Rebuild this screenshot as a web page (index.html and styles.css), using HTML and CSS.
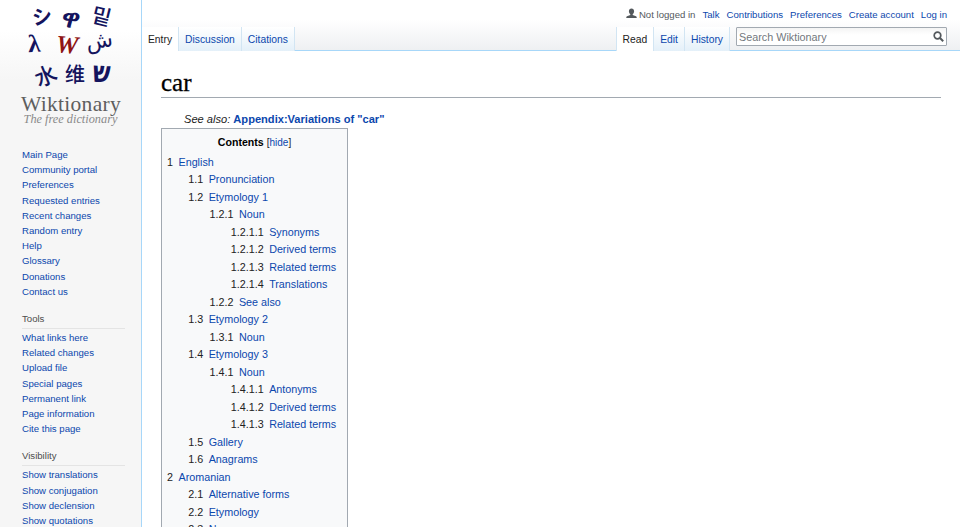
FILE: index.html
```html
<!DOCTYPE html>
<html lang="en">
<head>
<meta charset="utf-8">
<title>car - Wiktionary</title>
<link rel="stylesheet" href="styles.css">
</head>
<body>
<div class="page">
  <aside class="sidebar">
    <div class="logo">
      <div class="glyphs">
        <span class="g g1">シ</span><span class="g g2">ዋ</span><span class="g g3">밑</span>
        <span class="g g4">λ</span><span class="g g5">W</span><span class="g g6">ش</span>
        <span class="g g7">水</span><span class="g g8">维</span><span class="g g9">ש</span>
      </div>
      <div class="wordmark">Wiktionary</div>
      <div class="tagline">The free dictionary</div>
    </div>
    <nav class="portal first">
      <ul>
        <li><a href="#">Main Page</a></li>
        <li><a href="#">Community portal</a></li>
        <li><a href="#">Preferences</a></li>
        <li><a href="#">Requested entries</a></li>
        <li><a href="#">Recent changes</a></li>
        <li><a href="#">Random entry</a></li>
        <li><a href="#">Help</a></li>
        <li><a href="#">Glossary</a></li>
        <li><a href="#">Donations</a></li>
        <li><a href="#">Contact us</a></li>
      </ul>
    </nav>
    <nav class="portal">
      <h3>Tools</h3>
      <ul>
        <li><a href="#">What links here</a></li>
        <li><a href="#">Related changes</a></li>
        <li><a href="#">Upload file</a></li>
        <li><a href="#">Special pages</a></li>
        <li><a href="#">Permanent link</a></li>
        <li><a href="#">Page information</a></li>
        <li><a href="#">Cite this page</a></li>
      </ul>
    </nav>
    <nav class="portal">
      <h3>Visibility</h3>
      <ul>
        <li><a href="#">Show translations</a></li>
        <li><a href="#">Show conjugation</a></li>
        <li><a href="#">Show declension</a></li>
        <li><a href="#">Show quotations</a></li>
      </ul>
    </nav>
  </aside>
  <main class="main">
    <header class="head">
      <div class="userlinks">
        <svg class="usericon" width="11" height="11" viewBox="0 0 11 11"><path fill="#54595d" d="M5.5 0.5c1.6 0 2.6 1.2 2.6 2.8 0 1.3-.7 2.4-1.4 2.9v.7l3.3 1.3c.5.2.7.6.7 1.1v.7H.3v-.7c0-.5.2-.9.7-1.1l3.3-1.3v-.7c-.7-.5-1.4-1.6-1.4-2.9C2.9 1.700 3.900.5 5.500.5z"/></svg>
        <span class="anon">Not logged in</span>
        <a href="#">Talk</a>
        <a href="#">Contributions</a>
        <a href="#">Preferences</a>
        <a href="#">Create account</a>
        <a href="#">Log in</a>
      </div>
      <div class="tabbar">
        <div class="tabs">
          <a class="tab selected" href="#">Entry</a>
          <a class="tab" href="#">Discussion</a>
          <a class="tab" href="#">Citations</a>
        </div>
        <div class="tabs right">
          <a class="tab selected" href="#">Read</a>
          <a class="tab" href="#">Edit</a>
          <a class="tab" href="#">History</a>
          <div class="search">
            <span class="placeholder">Search Wiktionary</span>
            <svg width="11" height="11" viewBox="0 0 11 11"><circle cx="4.500" cy="4.500" r="3.300" fill="none" stroke="#54595d" stroke-width="1.700"/><path d="M7 7l3.200 3.200" stroke="#54595d" stroke-width="2" fill="none"/></svg>
          </div>
        </div>
      </div>
    </header>
    <article class="content">
      <h1>car</h1>
      <div class="hatnote">See also: <a href="#">Appendix:Variations of "car"</a></div>
      <div class="toc">
        <div class="toctitle"><strong>Contents</strong> <span class="toggle">[<a href="#">hide</a>]</span></div>
        <ul class="toclist">
          <li><span class="num">1</span><a href="#">English</a>
            <ul>
              <li><span class="num">1.1</span><a href="#">Pronunciation</a></li>
              <li><span class="num">1.2</span><a href="#">Etymology 1</a>
                <ul>
                  <li><span class="num">1.2.1</span><a href="#">Noun</a>
                    <ul>
                      <li><span class="num">1.2.1.1</span><a href="#">Synonyms</a></li>
                      <li><span class="num">1.2.1.2</span><a href="#">Derived terms</a></li>
                      <li><span class="num">1.2.1.3</span><a href="#">Related terms</a></li>
                      <li><span class="num">1.2.1.4</span><a href="#">Translations</a></li>
                    </ul>
                  </li>
                  <li><span class="num">1.2.2</span><a href="#">See also</a></li>
                </ul>
              </li>
              <li><span class="num">1.3</span><a href="#">Etymology 2</a>
                <ul>
                  <li><span class="num">1.3.1</span><a href="#">Noun</a></li>
                </ul>
              </li>
              <li><span class="num">1.4</span><a href="#">Etymology 3</a>
                <ul>
                  <li><span class="num">1.4.1</span><a href="#">Noun</a>
                    <ul>
                      <li><span class="num">1.4.1.1</span><a href="#">Antonyms</a></li>
                      <li><span class="num">1.4.1.2</span><a href="#">Derived terms</a></li>
                      <li><span class="num">1.4.1.3</span><a href="#">Related terms</a></li>
                    </ul>
                  </li>
                </ul>
              </li>
              <li><span class="num">1.5</span><a href="#">Gallery</a></li>
              <li><span class="num">1.6</span><a href="#">Anagrams</a></li>
            </ul>
          </li>
          <li><span class="num">2</span><a href="#">Aromanian</a>
            <ul>
              <li><span class="num">2.1</span><a href="#">Alternative forms</a></li>
              <li><span class="num">2.2</span><a href="#">Etymology</a></li>
              <li><span class="num">2.3</span><a href="#">Noun</a></li>
            </ul>
          </li>
        </ul>
      </div>
    </article>
  </main>
</div>
</body>
</html>
```
FILE: styles.css
```css
* { box-sizing: border-box; }
html, body { margin: 0; padding: 0; height: 527px; overflow: hidden; }
body { font-family: "Liberation Sans", Arial, sans-serif; background: #f6f6f6; color: #222; }
a { color: #0b47ad; text-decoration: none; }
ul { list-style: none; margin: 0; padding: 0; }

.page { display: flex; height: 527px; overflow: hidden; }

.sidebar { width: 142px; flex: none; border-right: 1px solid #a7d7f9; background: linear-gradient(#fff 0, #fff 30px, #f6f6f6 80px); }
.logo { height: 147px; }
.glyphs { position: relative; height: 90px; color: #14145e; }
.g { position: absolute; display: block; line-height: 1.200; font-family: "DejaVu Sans", "Noto Sans CJK JP", sans-serif; font-weight: bold; }
.g1 { left: 32px; top: 4px; font-size: 20px; transform: rotate(-8deg); font-family: "Noto Sans CJK JP", sans-serif; }
.g2 { left: 62px; top: 2px; font-size: 26px; transform: rotate(8deg); font-family: "Noto Sans", "DejaVu Sans", sans-serif; }
.g3 { left: 92px; top: 3px; font-size: 21px; transform: rotate(14deg); font-family: "Noto Sans CJK KR", sans-serif; font-weight: 500; }
.g4 { left: 28px; top: 29px; font-size: 25px; font-family: "Liberation Serif", serif; transform: rotate(-3deg); }
.g5 { left: 56px; top: 30px; font-size: 25px; font-family: "Liberation Serif", serif; color: #8e1414; font-style: italic; transform: rotate(4deg); }
.g6 { left: 86px; top: 28px; font-size: 22px; transform: rotate(-8deg); font-weight: normal; }
.g7 { left: 34px; top: 61px; font-size: 22px; transform: rotate(-22deg); font-family: "Noto Sans CJK SC", sans-serif; font-weight: 500; }
.g8 { left: 65px; top: 62px; font-size: 20px; font-family: "Noto Sans CJK SC", sans-serif; font-weight: 500; }
.g9 { left: 93px; top: 59px; font-size: 23px; transform: rotate(3deg) scaleY(1.300); font-family: "DejaVu Sans", sans-serif; }
.wordmark { font-family: "Liberation Serif", serif; font-size: 21.500px; letter-spacing: .3px; color: #5e5e5e; text-align: center; line-height: 20px; margin-top: 4px; padding-left: 1px; }
.tagline { font-family: "Liberation Serif", serif; font-style: italic; font-size: 12.300px; color: #8a8a8a; text-align: center; line-height: 13px; margin-top: -1px; }

.portal { margin: 0 16px 0 22px; padding-bottom: 13px; font-size: 9.600px; }
.portal li { line-height: 15.200px; white-space: nowrap; }
.portal h3 { margin: 0 0 1px; padding: 0 0 2px; font-size: 9.600px; font-weight: normal; color: #4d4d4d; line-height: 14px; border-bottom: 1px solid #e4e4e4; }

.main { flex: 1; min-width: 0; background: #fff; }
.head { height: 51px; background: linear-gradient(#fff 0, #fff 20px, #eef0f2 50px); }
.userlinks { display: flex; justify-content: flex-end; align-items: center; height: 27px; padding: 2px 13px 0 0; font-size: 9.600px; gap: 7px; }
.usericon { margin-right: -5px; margin-top: -2px; }
.anon { color: #54595d; }
.tabbar { display: flex; justify-content: space-between; height: 24px; border-bottom: 1px solid #a7d7f9; padding-right: 13px; }
.tabs { display: flex; align-items: stretch; height: 24px; }
.tab { display: flex; align-items: flex-start; padding: 7px 6px 0; font-size: 10.300px; border-right: 1px solid #d2e5f3; background: linear-gradient(#fff, #e4f0f9); white-space: nowrap; }
.tab.selected { color: #222; background: #fff; }
.right .tab:first-child { border-left: 1px solid #d2e5f3; }
.search { display: flex; align-items: center; justify-content: space-between; width: 211px; height: 19px; margin-left: 6px; padding: 0 2px; background: linear-gradient(#f4f4f4, #fff 40%); border: 1px solid #a2a9b1; border-radius: 1px; align-self: flex-start; font-size: 10.800px; color: #72777d; }

.content { padding: 0 19px; }
h1 { margin: 18px 0 0; height: 29px; font-family: "Liberation Serif", serif; font-weight: normal; font-size: 25px; line-height: 28px; color: #000; border-bottom: 1px solid #a2a9b1; -webkit-text-stroke: .3px #000; }
.hatnote { margin-top: 14px; padding-left: 23px; height: 16px; font-size: 11.100px; line-height: 15px; font-style: italic; color: #222; }
.hatnote a { font-weight: bold; font-style: normal; }
.toc { width: 187px; padding: 5px 5px 0; background: #f8f9fa; border: 1px solid #a2a9b1; font-size: 10.760px; }
.toctitle { text-align: center; line-height: 17px; margin-bottom: 2.500px; font-size: 10.600px; }
.toctitle strong { color: #000; }
.toggle { font-size: 10px; }
.toclist li { line-height: 17.500px; white-space: nowrap; }
.toclist ul { margin-left: 21.250px; }
.num { color: #222; margin-right: 5.500px; }
```
